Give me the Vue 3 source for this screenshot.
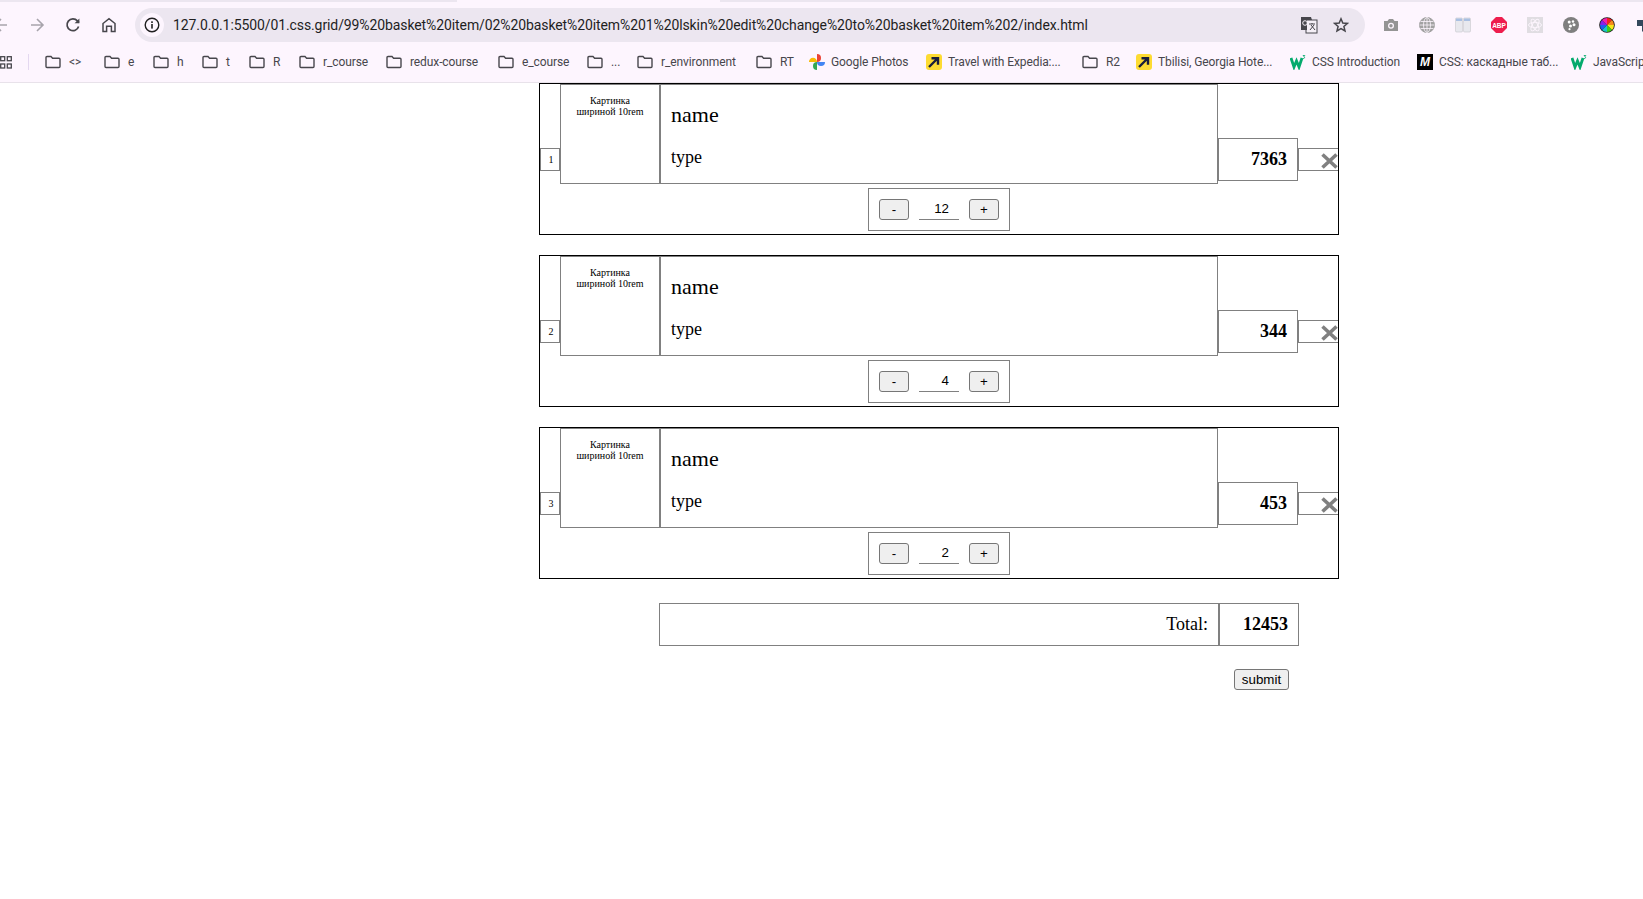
<script setup>
const marks = [
  { x: 45, t: '<>', k: 'f' }, { x: 104, t: 'e', k: 'f' }, { x: 153, t: 'h', k: 'f' }, { x: 202, t: 't', k: 'f' },
  { x: 249, t: 'R', k: 'f' }, { x: 299, t: 'r_course', k: 'f' }, { x: 386, t: 'redux-course', k: 'f' },
  { x: 498, t: 'e_course', k: 'f' }, { x: 587, t: '...', k: 'f' }, { x: 637, t: 'r_environment', k: 'f' },
  { x: 756, t: 'RT', k: 'f' }, { x: 809, t: 'Google Photos', k: 'g' }, { x: 926, t: 'Travel with Expedia:...', k: 'e' },
  { x: 1082, t: 'R2', k: 'f' }, { x: 1136, t: 'Tbilisi, Georgia Hote...', k: 'e' }, { x: 1290, t: 'CSS Introduction', k: 'w' },
  { x: 1417, t: 'CSS: каскадные таб...', k: 'm' }, { x: 1571, t: 'JavaScript', k: 'w' }, { x: 1660, t: '', k: '' }
]
const bookmarks = marks.slice(0, -1).map((m, i) => ({ ...m, w: marks[i + 1].x - m.x }))
const items = [
  { n: 1, price: 7363, qty: 12 },
  { n: 2, price: 344, qty: 4 },
  { n: 3, price: 453, qty: 2 }
]
</script>

<template>
  <div class="root">
    <header class="chrome">
      <div class="tabstrip"><div class="tabgap"></div></div>
      <div class="toolbar">
        <div class="slot">
          <svg width="16" height="16" viewBox="0 0 16 16" fill="none" stroke="#a8a4ac" stroke-width="1.6"><path d="M14 8H2M8 2 2 8l6 6"/></svg>
        </div>
        <div class="slot">
          <svg width="16" height="16" viewBox="0 0 16 16" fill="none" stroke="#a8a4ac" stroke-width="1.6"><path d="M2 8h12M8 2l6 6-6 6"/></svg>
        </div>
        <div class="slot">
          <svg width="16" height="16" viewBox="0 0 16 16" fill="none" stroke="#47464c" stroke-width="1.7"><path d="M13.6 9.5A5.9 5.9 0 1 1 12.4 3.9L14 5.6"/><path d="M14.4 1.5v4.8H9.6z" fill="#47464c" stroke="none"/></svg>
        </div>
        <div class="slot">
          <svg width="16" height="16" viewBox="0 0 16 16" fill="none" stroke="#47464c" stroke-width="1.5"><path d="M2 14.5V6.5L8 1.6l6 4.9v8h-3.6V9.2H5.6v5.3z"/></svg>
        </div>
        <div class="pill">
          <div class="info">
            <svg width="16" height="16" viewBox="0 0 16 16"><circle cx="8" cy="8" r="6.8" fill="none" stroke="#1f1f1f" stroke-width="1.4"/><rect x="7.2" y="7" width="1.6" height="4.6" fill="#1f1f1f"/><rect x="7.2" y="4.3" width="1.6" height="1.7" fill="#1f1f1f"/></svg>
          </div>
          <span class="url">127.0.0.1:5500/01.css.grid/99%20basket%20item/02%20basket%20item%201%20lskin%20edit%20change%20to%20basket%20item%202/index.html</span>
          <svg class="translate" width="18" height="18" viewBox="0 0 18 18"><rect x="6" y="4" width="11" height="13" fill="#f4eff6" stroke="#47464c" stroke-width="1"/><path d="M9 8h6M12 7v1M10 14l4-5M11 9l4 5" stroke="#47464c" stroke-width="1" fill="none"/><path d="M1 1h10l1 3H7v10H1z" fill="#47464c"/><circle cx="5" cy="7" r="2.300" fill="none" stroke="#f4eff6" stroke-width="1"/></svg>
          <svg class="star" width="16" height="16" viewBox="0 0 16 16" fill="none" stroke="#47464c" stroke-width="1.500"><path d="M8 1.800 9.800 6l4.600.4-3.500 3 1.100 4.500L8 11.500l-4 2.400 1.100-4.500-3.500-3L6.200 6z"/></svg>
        </div>
        <div class="exts">
          <div class="slot">
            <svg width="16" height="16" viewBox="0 0 16 16"><path d="M1 4h3.500L6 2h4l1.500 2H15v10H1z" fill="#949494"/><circle cx="8" cy="8.800" r="3" fill="#fdf5fe"/><circle cx="8" cy="8.800" r="1.700" fill="#949494"/></svg>
          </div>
          <div class="slot">
            <svg width="16" height="16" viewBox="0 0 16 16" fill="none" stroke="#a2a2a2" stroke-width="1"><circle cx="8" cy="8" r="7.500" fill="#a2a2a2"/><g stroke="#fdf5fe" stroke-width=".8"><ellipse cx="8" cy="8" rx="3.500" ry="7.500"/><path d="M8 .5v15M.5 8h15M1.500 4.500h13M1.500 11.500h13"/></g></svg>
          </div>
          <div class="slot">
            <svg width="16" height="16" viewBox="0 0 16 16"><rect x="0.500" y="1" width="7" height="14" rx="1" fill="#e8e8ee" stroke="#c8c8cc" stroke-width=".6"/><rect x="8.500" y="1" width="7" height="14" rx="1" fill="#e8e8ee" stroke="#c8c8cc" stroke-width=".6"/><rect x="1" y="1.500" width="6" height="2.500" fill="#a9bfe2"/><rect x="9" y="1.500" width="6" height="2.500" fill="#a9bfe2"/></svg>
          </div>
          <div class="slot">
            <svg width="16" height="16" viewBox="0 0 16 16"><path d="M5 0h6l5 5v6l-5 5H5l-5-5V5z" fill="#ee1d4d"/><text x="8" y="10.800" text-anchor="middle" class="abp">ABP</text></svg>
          </div>
          <div class="slot">
            <svg width="16" height="16" viewBox="0 0 16 16"><rect width="16" height="16" fill="#e0dde2"/><g fill="none" stroke="#fdf5fe" stroke-width=".9"><ellipse cx="8" cy="8" rx="6.500" ry="2.600"/><ellipse cx="8" cy="8" rx="6.500" ry="2.600" transform="rotate(60 8 8)"/><ellipse cx="8" cy="8" rx="6.500" ry="2.600" transform="rotate(120 8 8)"/></g></svg>
          </div>
          <div class="slot">
            <svg width="16" height="16" viewBox="0 0 16 16"><circle cx="8" cy="8" r="8" fill="#7f7f7f"/><circle cx="6.200" cy="5" r="1.500" fill="#fff"/><circle cx="10" cy="4.500" r="1.200" fill="#fff"/><circle cx="11" cy="7.800" r="1.500" fill="#fff"/><circle cx="7.500" cy="9" r="1.500" fill="#fff"/><circle cx="6.500" cy="12.200" r="1.100" fill="#fff"/></svg>
          </div>
          <div class="slot">
            <svg width="16" height="16" viewBox="0 0 16 16"><circle cx="8" cy="8" r="7.800" fill="#1a1a1a"/><path d="M8 8V1a7 7 0 0 1 5 2z" fill="#f72020"/><path d="M8 8l5-5a7 7 0 0 1 2 5z" fill="#f78a1a"/><path d="M8 8h7a7 7 0 0 1-2 5z" fill="#f7e81a"/><path d="M8 8l5 5a7 7 0 0 1-5 2z" fill="#3bd01f"/><path d="M8 8v7a7 7 0 0 1-5-2z" fill="#19c8c4"/><path d="M8 8l-5 5a7 7 0 0 1-2-5z" fill="#1f5ef0"/><path d="M8 8H1a7 7 0 0 1 2-5z" fill="#8a20e8"/><path d="M8 8 3 3a7 7 0 0 1 5-2z" fill="#f01fb0"/></svg>
          </div>
          <div class="slot">
            <svg width="16" height="16" viewBox="0 0 16 16"><path d="M2 3h12v6H9.500v5.500H7V9H2z" fill="#33485c"/></svg>
          </div>
        </div>
      </div>
      <div class="bookmarks">
        <div class="apps">
          <svg width="12" height="13" viewBox="0 0 12 13" fill="none" stroke="#47464c" stroke-width="1.300"><rect x=".7" y=".7" width="4" height="4"/><rect x="7.300" y=".7" width="4" height="4"/><rect x=".7" y="8" width="4" height="4"/><rect x="7.300" y="8" width="4" height="4"/></svg>
        </div>
        <div class="sep"></div>
        <div v-for="b in bookmarks" :key="b.x" class="mark" :class="{ 'mark-folder': b.k === 'f' }" :style="{ width: b.w + 'px' }">
          <svg v-if="b.k === 'f'" width="16" height="16" viewBox="0 0 16 16" fill="none" stroke="#47464c" stroke-width="1.400"><path d="M1 3.500c0-.6.4-1 1-1h4l1.600 1.800H14c.6 0 1 .4 1 1v7.200c0 .6-.4 1-1 1H2c-.6 0-1-.4-1-1z"/></svg>
          <svg v-else-if="b.k === 'g'" width="16" height="16" viewBox="0 0 16 16"><path d="M4 3.800a4 4 0 0 1 4 4.200H0a4 4 0 0 1 4-4.200z" fill="#f9bb04"/><path d="M8 0a4 4 0 0 1 4 4 4 4 0 0 1-4 4z" fill="#ea4335"/><path d="M8 8h8a4 4 0 0 1-4 4 4 4 0 0 1-4-4z" fill="#4285f4"/><path d="M8 8v8a4 4 0 0 1-4-4 4 4 0 0 1 4-4z" fill="#34a853"/></svg>
          <svg v-else-if="b.k === 'e'" width="16" height="16" viewBox="0 0 16 16"><rect width="16" height="16" rx="3" fill="#fddb32"/><path d="M3 13 11 5M5.500 4.200H12v6.500" fill="none" stroke="#191e3b" stroke-width="2.400"/></svg>
          <svg v-else-if="b.k === 'w'" width="16" height="16" viewBox="0 0 16 16"><path d="M1 4 4 13 6.500 7 9 13 12 4" fill="none" stroke="#04aa6d" stroke-width="2.800"/><path d="M12.800 1.500h2l-1 1.300c1.200.2 1 2-.9 1.700" fill="none" stroke="#04aa6d" stroke-width=".9"/></svg>
          <span v-else-if="b.k === 'm'" class="mdn">M</span>
          <span class="mark-text">{{ b.t }}</span>
        </div>
      </div>
    </header>

    <main class="page">
      <section v-for="item in items" :key="item.n" class="item">
        <div class="num">{{ item.n }}</div>
        <div class="pic">Картинка<br>шириной 10rem</div>
        <div class="desc">
          <div class="name">name</div>
          <div class="type">type</div>
        </div>
        <div class="price">{{ item.price }}</div>
        <div class="remove">
          <svg width="17" height="16" viewBox="0 0 17 16" fill="none" stroke="#808080" stroke-width="3.600"><path d="M1.500 1.500 15.500 14.500M15.500 1.500 1.500 14.500"/></svg>
        </div>
        <div class="qty-row">
          <div class="qty">
            <button class="btn" type="button">-</button>
            <div class="count">{{ item.qty }}</div>
            <button class="btn" type="button">+</button>
          </div>
        </div>
      </section>

      <div class="total">
        <div class="total-label">Total:</div>
        <div class="total-sum">12453</div>
      </div>
      <div class="actions">
        <button class="submit" type="button">submit</button>
      </div>
    </main>
  </div>
</template>

<style>
html, body { margin: 0; background: #fff; overflow: hidden; }
</style>

<style scoped>
.root { width: 1643px; height: 899px; overflow: hidden; background: #fff; }
.chrome { height: 83px; background: #fdf5fe; overflow: hidden; box-sizing: border-box; border-bottom: 1px solid #e8e2ea; font-family: Roboto, sans-serif; }
.tabstrip { height: 2px; background: #ece6f0; padding-left: 457px; }
.tabgap { width: 263px; height: 2px; background: #fdf5fe; }
.toolbar { height: 40px; box-sizing: border-box; padding-top: 6px; display: flex; align-items: flex-start; margin-left: -17px; width: 1660px; }
.slot { width: 36px; height: 34px; flex: none; display: flex; align-items: center; justify-content: center; }
.pill { margin-left: 8px; width: 1230px; height: 34px; flex: none; border-radius: 17px; background: #ece6f0; display: flex; align-items: center; box-sizing: border-box; padding: 0 16px 0 5px; }
.info { width: 24px; height: 24px; border-radius: 50%; background: #fdf5fe; display: flex; align-items: center; justify-content: center; flex: none; }
.url { margin-left: 9px; font-size: 14px; letter-spacing: -0.1px; color: #1f1f1f; white-space: nowrap; flex: 1; }
.translate { flex: none; }
.star { margin-left: 15px; flex: none; }
.exts { margin-left: 8px; display: flex; flex: none; }
.bookmarks { height: 40px; display: flex; align-items: center; width: 1700px; }
.apps { width: 28px; flex: none; display: flex; }
.sep { width: 1px; height: 16px; background: #e4d8f0; margin-right: 16px; flex: none; }
.mark { display: flex; align-items: center; gap: 6px; flex: none; font-size: 12px; letter-spacing: -0.1px; color: #47464c; white-space: nowrap; }
.mark-folder { gap: 8px; }
.mark svg { flex: none; }
.mdn { width: 16px; height: 16px; background: #000; color: #fff; font: italic 700 12px/16px "Liberation Sans", sans-serif; text-align: center; flex: none; }
.abp { font: 700 6.500px "Liberation Sans", sans-serif; fill: #fff; }

.page { width: 800px; margin-left: 539px; display: flex; flex-direction: column; font-family: "Liberation Serif", serif; color: #000; }
.item { box-sizing: border-box; height: 152px; border: 1px solid #000; display: grid; grid-template-columns: 20px 100px 1fr 80px 40px; grid-template-rows: 100px 50px; margin-bottom: 20px; }
.num { grid-column: 1; grid-row: 1 / 3; align-self: center; box-sizing: border-box; height: 23px; border: 1px solid #808080; padding-left: 2px; font-size: 10px; display: flex; align-items: center; justify-content: center; }
.pic { grid-column: 2; grid-row: 1; box-sizing: border-box; border: 1px solid #808080; padding-top: 10px; font-size: 10px; line-height: 11px; text-align: center; }
.desc { grid-column: 3; grid-row: 1; box-sizing: border-box; border: 1px solid #808080; padding: 17px 10px 0; display: flex; flex-direction: column; gap: 20px; }
.name { font-size: 22px; line-height: 25px; }
.type { font-size: 18px; line-height: 21px; }
.price { grid-column: 4; grid-row: 1 / 3; align-self: start; margin-top: 54px; box-sizing: border-box; height: 43px; border: 1px solid #808080; padding: 0 10px; font-size: 18px; font-weight: 700; display: flex; align-items: center; justify-content: flex-end; }
.remove { grid-column: 5; grid-row: 1 / 3; align-self: center; box-sizing: border-box; height: 23px; border: 1px solid #808080; border-right: 0; display: flex; justify-content: flex-end; align-items: flex-end; }
.remove svg { margin-bottom: 1px; }
.qty-row { grid-column: 1 / -1; grid-row: 2; display: flex; align-items: flex-start; justify-content: center; padding-top: 4px; }
.qty { box-sizing: border-box; height: 43px; border: 1px solid #808080; padding: 0 10px; display: flex; align-items: center; gap: 10px; }
.btn { box-sizing: border-box; width: 30px; height: 21px; padding: 0; background: #efefef; border: 1px solid #767676; border-radius: 3px; font: 13.333px "Liberation Sans", sans-serif; color: #000; }
.count { box-sizing: border-box; width: 40px; height: 21px; border-bottom: 1px solid #808080; padding-right: 10px; font: 13.333px/19px "Liberation Sans", sans-serif; text-align: right; }
.total { margin-top: 4px; margin-left: 120px; display: flex; height: 43px; }
.total-label { box-sizing: border-box; width: 560px; border: 1px solid #808080; padding: 0 10px; font-size: 18px; display: flex; align-items: center; justify-content: flex-end; }
.total-sum { box-sizing: border-box; width: 80px; border: 1px solid #808080; padding: 0 10px; font-size: 18px; font-weight: 700; display: flex; align-items: center; justify-content: flex-end; }
.actions { margin-top: 23px; padding-right: 50px; display: flex; justify-content: flex-end; }
.submit { box-sizing: border-box; width: 55px; height: 21px; padding: 0; background: #efefef; border: 1px solid #767676; border-radius: 3px; font: 13.333px "Liberation Sans", sans-serif; color: #000; }
</style>
